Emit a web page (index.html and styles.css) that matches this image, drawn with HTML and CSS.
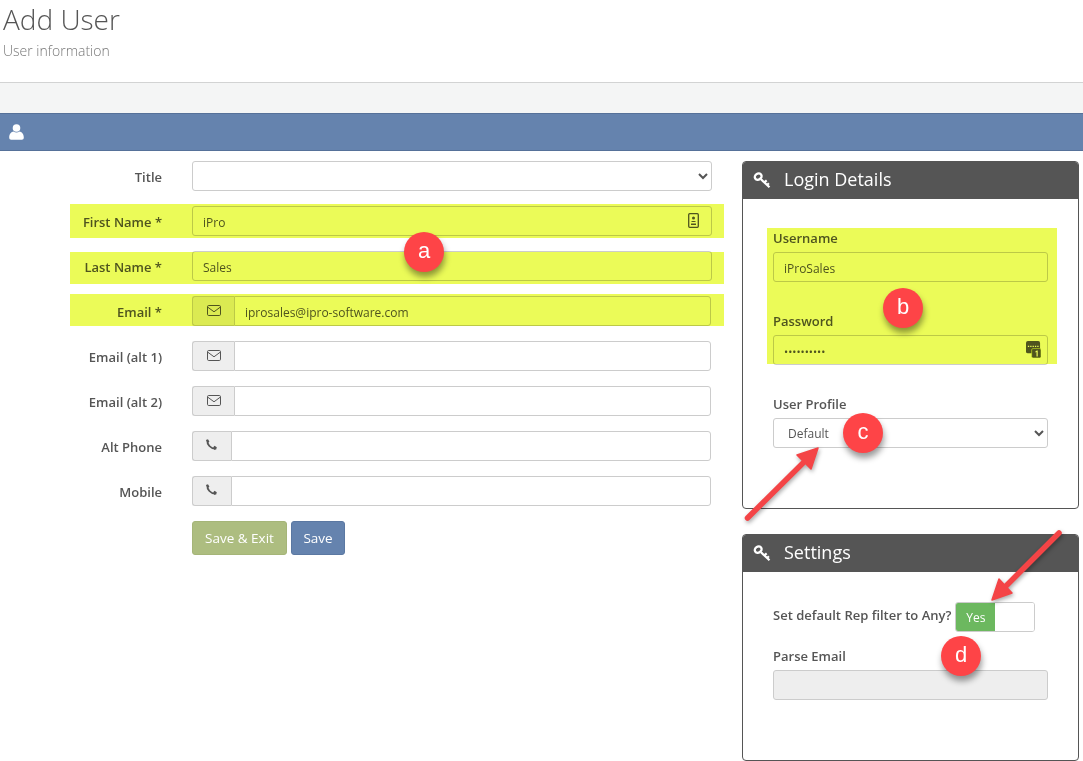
FILE: index.html
```html
<!DOCTYPE html>
<html lang="en">
<head>
<meta charset="utf-8">
<title>Add User</title>
<link rel="stylesheet" href="styles.css">
</head>
<body>
<svg class="defs" width="0" height="0" aria-hidden="true">
  <defs>
    <symbol id="i-mail" viewBox="0 0 14 11"><rect x=".5" y=".5" width="13" height="10" rx="1.2" fill="none" stroke="currentColor"/><path d="M.8 2.2 7 6.8l6.2-4.6" fill="none" stroke="currentColor"/></symbol>
    <symbol id="i-phone" viewBox="0 0 12 12"><path d="M2.400 1.500C2 5.500 5.500 9.500 10 9.600" fill="none" stroke="currentColor" stroke-width="1.800"/><path d="M.9.900 3 .2l1.400 2.600-1.800 1.100zM8.300 8.200l1.200-1.500 2.300 1.600-.6 2.200-2 .3z" fill="currentColor"/></symbol>
    <symbol id="i-key" viewBox="0 0 18 18"><ellipse cx="5.200" cy="5.600" rx="3.600" ry="3" transform="rotate(-35 5.200 5.600)" fill="none" stroke="currentColor" stroke-width="2.300"/><path d="M8 8.300 16.500 16.300M11.300 11.400 13.700 9.400M14 14 15.900 12.200" fill="none" stroke="currentColor" stroke-width="2.200"/></symbol>
  </defs>
</svg>

<header class="page-head">
  <h1 class="page-title">Add User</h1>
  <p class="page-sub">User information</p>
</header>
<div class="toolbar"></div>
<div class="section-bar">
  <svg class="user-icon" viewBox="0 0 15 16"><circle cx="7.500" cy="4" r="3.800" fill="currentColor"/><path d="M.2 13.500C.2 9.800 2.500 7.800 4.500 7.500c1.800 1.200 4.200 1.200 6 0 2 .3 4.300 2.300 4.300 6 0 1.300-.8 2.300-2 2.300H2.200c-1.200 0-2-1-2-2.300z" fill="currentColor"/></svg>
</div>

<main class="content">
  <form class="user-form">
    <label class="row-label">Title</label>
    <select class="control"><option></option></select>

    <label class="row-label">First Name *</label>
    <div class="with-icon">
      <input class="control" value="iPro">
      <svg class="card-icon" viewBox="0 0 11 15"><rect x=".7" y=".7" width="9.600" height="13.600" rx="1" fill="none" stroke="currentColor" stroke-width="1.300"/><circle cx="5.500" cy="5" r="1.500" fill="currentColor"/><path d="M3 9c0-1.500 5-1.500 5 0zM3 10.500h5V12H3z" fill="currentColor"/></svg>
    </div>

    <label class="row-label">Last Name *</label>
    <input class="control" value="Sales">

    <label class="row-label">Email *</label>
    <div class="group">
      <span class="addon addon-mail"><svg class="mail-icon"><use href="#i-mail"/></svg></span>
      <input class="control group-input" value="iprosales@ipro-software.com">
    </div>

    <label class="row-label">Email (alt 1)</label>
    <div class="group">
      <span class="addon addon-mail"><svg class="mail-icon"><use href="#i-mail"/></svg></span>
      <input class="control group-input">
    </div>

    <label class="row-label">Email (alt 2)</label>
    <div class="group">
      <span class="addon addon-mail"><svg class="mail-icon"><use href="#i-mail"/></svg></span>
      <input class="control group-input">
    </div>

    <label class="row-label">Alt Phone</label>
    <div class="group">
      <span class="addon addon-phone"><svg class="phone-icon"><use href="#i-phone"/></svg></span>
      <input class="control group-input">
    </div>

    <label class="row-label">Mobile</label>
    <div class="group">
      <span class="addon addon-phone"><svg class="phone-icon"><use href="#i-phone"/></svg></span>
      <input class="control group-input">
    </div>

    <div class="actions">
      <button type="button" class="btn btn-green">Save &amp; Exit</button>
      <button type="button" class="btn btn-blue">Save</button>
    </div>
  </form>

  <aside class="side">
    <section class="panel panel-login">
      <h2 class="panel-head"><svg class="key-icon"><use href="#i-key"/></svg>Login Details</h2>
      <div class="panel-body">
        <label class="field-label">Username</label>
        <input class="control" value="iProSales">
        <label class="field-label field-gap">Password</label>
        <div class="with-icon">
          <input class="control control-pass" type="password" value="iProSales1">
          <svg class="pass-icon" viewBox="0 0 16 18"><rect x="0" y="0" width="15" height="13" rx="2" fill="currentColor"/><rect x="6" y="8" width="10" height="10" rx="1.500" fill="currentColor" stroke="#ebfb58" stroke-width=".6"/><path d="M2 5h1.400v1.400H2zM4.500 5h1.400v1.400H4.500zM7 5h1.400v1.400H7zM9.500 5h1.400v1.400H9.500zM12 5h1.400v1.400H12z" fill="#fff"/><path d="M10 11l1.500-1h1v6.500h-1.300v-4.800l-1.200.6z" fill="#fff"/></svg>
        </div>
        <label class="field-label field-gap">User Profile</label>
        <select class="control select-profile"><option>Default</option></select>
      </div>
    </section>

    <section class="panel panel-settings">
      <h2 class="panel-head"><svg class="key-icon"><use href="#i-key"/></svg>Settings</h2>
      <div class="panel-body">
        <div class="switch-row">
          <label class="field-label switch-label">Set default Rep filter to Any?</label>
          <span class="switch"><span class="switch-on">Yes</span><span class="switch-off"></span></span>
        </div>
        <label class="field-label parse-label">Parse Email</label>
        <input class="control control-disabled" disabled>
      </div>
    </section>
  </aside>
</main>

<div class="marks">
  <span class="hl hl-first"></span>
  <span class="hl hl-last"></span>
  <span class="hl hl-email"></span>
  <span class="hl hl-login"></span>
  <svg class="arrows" viewBox="0 0 1083 761">
    <g fill="#f44446" stroke="#f44446" stroke-linejoin="round">
      <path d="M747.500 518 803 463" stroke-width="5.500" stroke-linecap="round"/>
      <path d="M818 448 797 455 811 469z" stroke-width="1.500"/>
      <path d="M1059 533 1006 586" stroke-width="5.500" stroke-linecap="round"/>
      <path d="M992 600 1012 593 999 579z" stroke-width="1.500"/>
    </g>
  </svg>
  <span class="badge badge-a">a</span>
  <span class="badge badge-b">b</span>
  <span class="badge badge-c">c</span>
  <span class="badge badge-d">d</span>
</div>
</body>
</html>
```
FILE: styles.css
```css
* { box-sizing: border-box; }
html, body { margin: 0; padding: 0; }
body {
  position: relative;
  height: 761px;
  overflow: hidden;
  background: #fff;
  color: #555;
  font-family: "Open Sans", "Liberation Sans", sans-serif;
  font-size: 13px;
}
.defs { position: absolute; }

.page-head {
  height: 83px;
  padding: 3px 0 0 3px;
  border-bottom: 1px solid #d2d3d3;
}
.page-title {
  margin: 0;
  font-size: 28px;
  line-height: 33px;
  font-weight: 300;
  color: #555;
}
.page-sub {
  margin: 6px 0 0;
  font-size: 14px;
  line-height: 18px;
  font-weight: 300;
  color: #777;
}
.toolbar { height: 30px; background: #f4f5f5; }
.section-bar {
  height: 38px;
  display: flex;
  align-items: center;
  padding-left: 9px;
  background: #6583ae;
  border-top: 1px solid #567199;
  border-bottom: 1px solid #567199;
  color: #fff;
}
.user-icon { width: 15px; height: 16px; margin-top: -1px; }

.content {
  display: flex;
  align-items: flex-start;
  padding-top: 10px;
}
.user-form {
  width: 712px;
  display: grid;
  grid-template-columns: 162px 520px;
  column-gap: 30px;
  row-gap: 15px;
  align-items: center;
}
.row-label {
  padding-top: 2px;
  text-align: right;
  font-weight: 600;
  color: #555;
  line-height: 18px;
}
.control {
  display: block;
  width: 100%;
  height: 30px;
  padding: 2px 10px 0;
  border: 1px solid #ccc;
  border-radius: 3px;
  background: #fff;
  color: #555;
  font-family: inherit;
  font-size: 12px;
  outline: none;
}
select.control { padding: 0 4px; }
select.select-profile { padding-left: 10px; }
.control-pass { font-size: 11px; }
.control-disabled { background: #eee; }
.with-icon { position: relative; }
.card-icon {
  position: absolute;
  right: 13px;
  top: 7px;
  width: 11px;
  height: 15px;
  color: #555;
}
.pass-icon {
  position: absolute;
  right: 7px;
  top: 6px;
  width: 15px;
  height: 17px;
  color: #555;
}
.group { display: flex; width: 519px; height: 30px; }
.addon {
  display: flex;
  align-items: center;
  justify-content: center;
  height: 30px;
  background: #eee;
  border: 1px solid #ccc;
  border-right: 0;
  border-radius: 3px 0 0 3px;
  color: #555;
}
.addon-mail { width: 42px; flex: none; }
.addon-phone { width: 39px; flex: none; }
.mail-icon { width: 14px; height: 11px; margin-top: -1px; }
.phone-icon { width: 12px; height: 12px; margin-top: -2px; margin-right: 2px; }
.group-input { flex: 1; min-width: 0; border-radius: 0 3px 3px 0; }
.actions {
  grid-column: 2;
  display: flex;
  gap: 4px;
}
.btn {
  height: 34px;
  padding: 0 12px;
  border: 1px solid;
  border-radius: 3px;
  color: #fff;
  font-family: inherit;
  font-size: 13.5px;
}
.btn-green { background: #adbd80; border-color: #a5b578; }
.btn-blue { padding: 0 11.5px; background: #6583ae; border-color: #5b78a2; }

.side {
  width: 337px;
  margin-left: 30px;
  display: flex;
  flex-direction: column;
  gap: 25px;
}
.panel {
  border: 1px solid #555;
  border-radius: 4px;
  overflow: hidden;
  background: #fff;
}
.panel-login { height: 348px; }
.panel-settings { height: 227px; }
.panel-head {
  display: flex;
  align-items: center;
  height: 37px;
  margin: 0;
  padding: 0 0 4px 10px;
  background: #555;
  color: #fff;
  font-size: 18px;
  line-height: 24px;
  font-weight: 400;
}
.key-icon { width: 18px; height: 18px; margin-right: 13px; margin-top: 3px; }
.panel-body { padding: 30px 30px 0; }
.field-label {
  display: block;
  font-weight: 600;
  color: #555;
  line-height: 18px;
  margin: 0 0 5px;
}
.field-gap { margin-top: 30px; }
.switch-row { display: flex; align-items: center; }
.switch-label { margin: 0 4px 4px 0; white-space: nowrap; }
.switch {
  display: flex;
  width: 80px;
  height: 30px;
  flex: none;
  border: 1px solid #ccc;
  border-radius: 3px;
  overflow: hidden;
}
.switch-on {
  width: 39px;
  display: flex;
  align-items: center;
  justify-content: center;
  background: #6cb85f;
  color: #fff;
  font-size: 12px;
  font-weight: 400;
}
.switch-off { flex: 1; background: #fff; }
.parse-label { margin-top: 15px; }

.marks { position: absolute; inset: 0; pointer-events: none; }
.hl {
  position: absolute;
  background: #ebfb58;
  mix-blend-mode: multiply;
}
.hl-first { left: 70px; top: 204px; width: 654px; height: 34px; }
.hl-last { left: 70px; top: 252px; width: 654px; height: 32px; }
.hl-email { left: 70px; top: 294px; width: 654px; height: 32px; }
.hl-login { left: 767px; top: 228px; width: 290px; height: 136px; }
.arrows {
  position: absolute;
  left: 0;
  top: 0;
  width: 1083px;
  height: 761px;
  filter: drop-shadow(1px 2px 2px rgba(0,0,0,.35));
}
.badge {
  position: absolute;
  width: 40px;
  height: 40px;
  border-radius: 50%;
  background: #fe4447;
  color: #fff;
  font-family: "Liberation Sans", Arial, sans-serif;
  font-size: 22px;
  line-height: 38px;
  text-align: center;
  box-shadow: 1px 5px 6px rgba(0,0,0,.4);
}
.badge-a { left: 404px; top: 232px; }
.badge-b { left: 883px; top: 288px; }
.badge-c { left: 843px; top: 413px; }
.badge-d { left: 941px; top: 636px; }
```
